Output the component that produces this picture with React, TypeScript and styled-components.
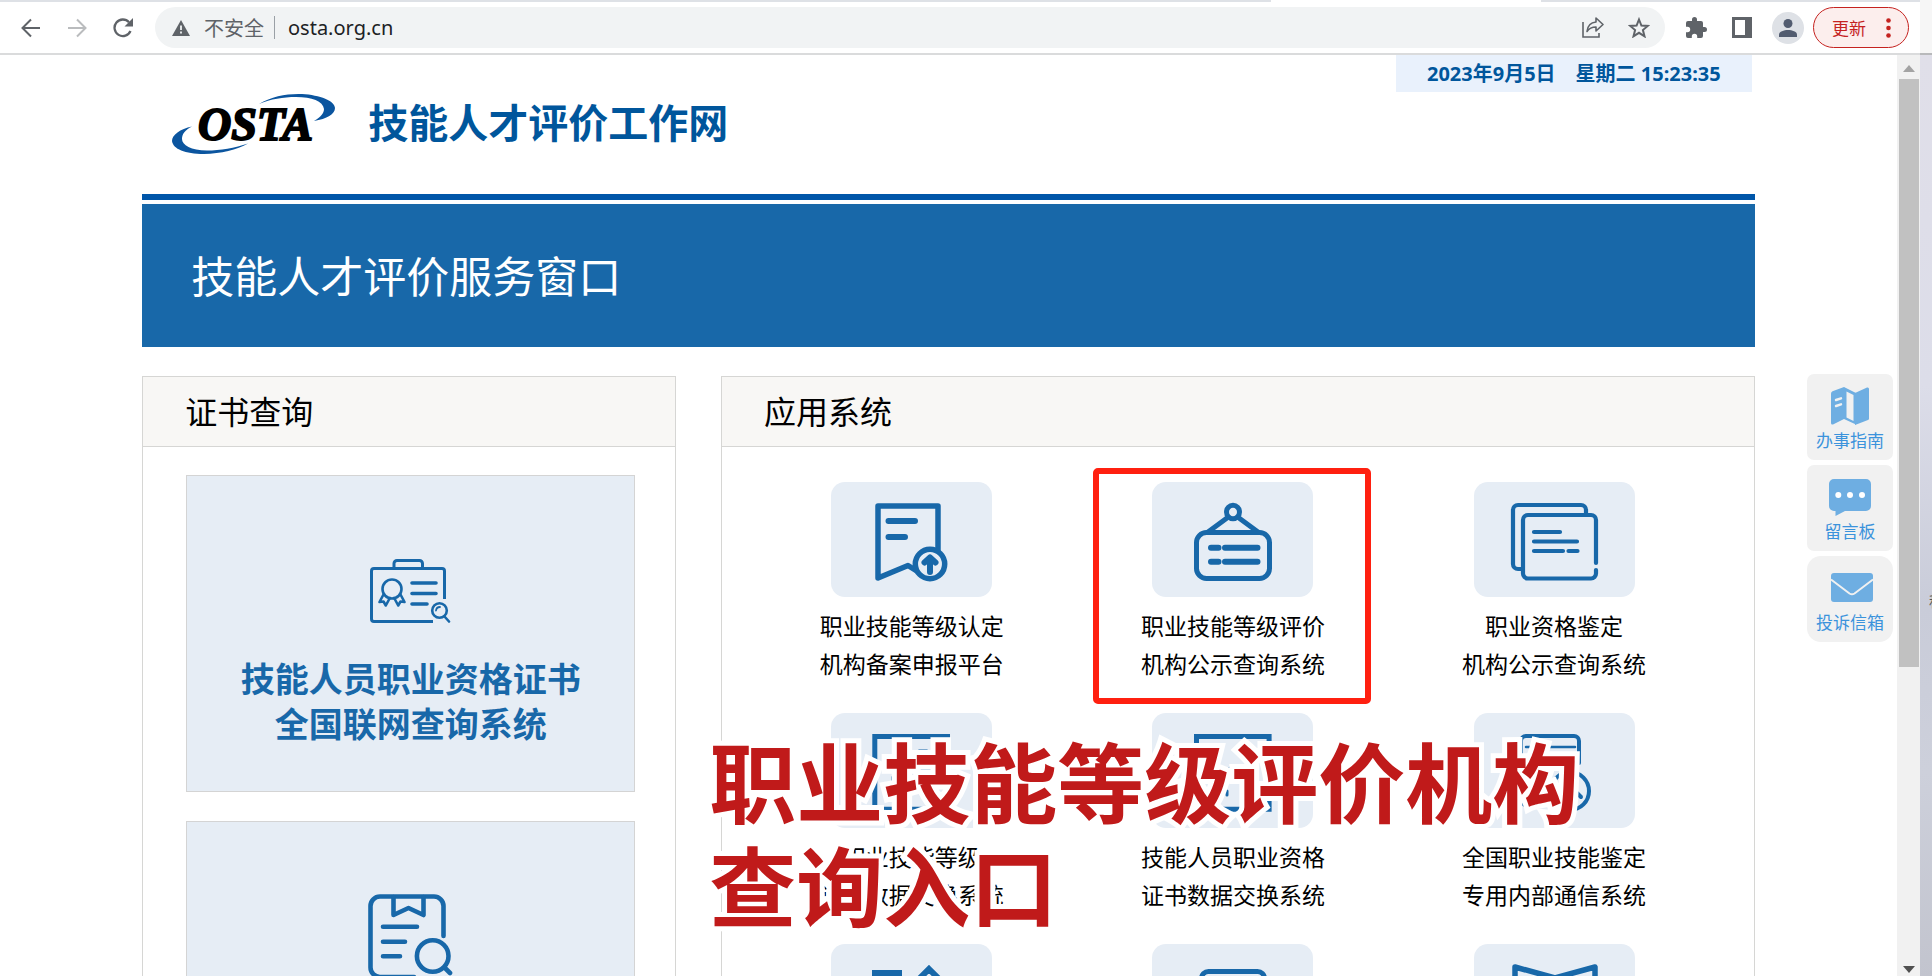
import React from "react";
import styled, { createGlobalStyle } from "styled-components";

const font = '"Noto Sans", "Noto Sans CJK SC", sans-serif';
const brand = "#1868a9";
const deep = "#00569c";
const tint = "#e6edf5";
const line = "#d6d6d4";

const GlobalStyle = createGlobalStyle`
  * { box-sizing: border-box; }
  body { margin: 0; background: #fff; font-family: ${font}; color: #000; }
  button, input { font-family: inherit; border: 0; padding: 0; background: none; }
  h1, h2, p, ul { margin: 0; padding: 0; font-weight: 400; }
  a { color: inherit; text-decoration: none; }
  svg { display: block; flex: none; }
`;

const Screen = styled.div`
  display: flex;
  height: 100vh;
  overflow: hidden;
`;

const Browser = styled.div`
  flex: 1;
  min-width: 0;
  display: flex;
  flex-direction: column;
`;

const TabStrip = styled.div`
  display: flex;
  height: 2px;
  background: #dee1e6;
`;

const TabSpace = styled.div<{ $grow: number; $active?: boolean }>`
  flex: ${(p) => p.$grow};
  background: ${(p) => (p.$active ? "#fff" : "transparent")};
`;

const Toolbar = styled.div`
  display: flex;
  align-items: center;
  height: 53px;
  padding: 0 11px 0 8px;
  border-bottom: 2px solid #dadbdc;
  background: #fff;
`;

const IconButton = styled.button`
  width: 46px;
  height: 41px;
  display: flex;
  align-items: center;
  justify-content: center;
`;

const Omnibox = styled.div`
  flex: 1;
  display: flex;
  align-items: center;
  height: 41px;
  margin: 0 8px 0 9px;
  padding: 0 3px 0 17px;
  border-radius: 21px;
  background: #f1f3f4;
`;

const Security = styled.label`
  display: flex;
  align-items: center;
  gap: 14px;
  height: 23px;
  padding-right: 10px;
  border-right: 1px solid #9aa0a6;
  font-size: 20px;
  color: #5f6368;
`;

const Address = styled.input`
  flex: 1;
  min-width: 0;
  margin-left: 13px;
  font-size: 20px;
  color: #202124;
  outline: 0;
`;

const Avatar = styled.span`
  display: flex;
  align-items: center;
  justify-content: center;
  width: 32px;
  height: 32px;
  border-radius: 50%;
  background: #dee1e6;
`;

const UpdateButton = styled.button`
  display: flex;
  align-items: center;
  gap: 20px;
  height: 41px;
  width: 96px;
  margin-left: 2px;
  padding-left: 18px;
  border: 1px solid #c5221f;
  border-radius: 21px;
  background: #fceeed;
  color: #c5221f;
  font-size: 17px;
`;

const Viewport = styled.div`
  flex: 1;
  min-height: 0;
  display: flex;
`;

const Page = styled.main`
  position: relative;
  flex: 1;
  min-width: 0;
  overflow: hidden;
`;

const Container = styled.div`
  position: relative;
  width: 85%;
  margin: 0 auto;
`;

const SiteHeader = styled.header`
  display: flex;
  align-items: flex-start;
  height: 139px;
  padding: 0 3px 0 18px;
`;

const SiteLogo = styled.a`
  display: flex;
  align-items: center;
  gap: 8px;
  margin-top: 30px;
`;

const SiteName = styled.span`
  font-size: 40px;
  line-height: 75px;
  font-weight: 700;
  color: ${deep};
`;

const Clock = styled.p`
  margin-left: auto;
  padding: 0 31px;
  background: #e9f1fc;
  color: ${deep};
  font-size: 20px;
  line-height: 37px;
  font-weight: 700;
  white-space: pre;
`;

const Banner = styled.section`
  padding-left: 49px;
  border-top: 6px solid #0056a9;
  background: linear-gradient(#fff 4px, ${brand} 4px);
`;

const BannerTitle = styled.h1`
  padding: 6px 0 0;
  font-size: 43px;
  line-height: 141px;
  color: #fff;
`;

const Columns = styled.div`
  display: grid;
  grid-template-columns: 534fr 1034fr;
  gap: 45px;
  margin-top: 29px;
`;

const Panel = styled.section`
  border: 1px solid ${line};
`;

const PanelTitle = styled.h2`
  padding-left: 42px;
  border-bottom: 1px solid ${line};
  background: #f8f7f5;
  font-size: 32px;
  line-height: 69px;
`;

const CardList = styled.div`
  display: flex;
  flex-direction: column;
  gap: 29px;
  padding: 28px 40px 28px 43px;
`;

const Card = styled.a`
  display: flex;
  flex-direction: column;
  align-items: center;
  min-height: 317px;
  padding-top: 72px;
  border: 1px solid #d4d4d4;
  background: ${tint};
`;

const CardIcon = styled.span`
  display: flex;
  align-items: center;
  height: 86px;
  margin-bottom: 23px;
`;

const CardText = styled.span`
  font-size: 34px;
  line-height: 45px;
  font-weight: 700;
  color: ${brand};
  text-align: center;
`;

const AppGrid = styled.ul`
  display: grid;
  grid-template-columns: repeat(3, 1fr);
  row-gap: 30px;
  padding: 35px 39px 35px 29px;
  list-style: none;
`;

const AppItem = styled.li`
  position: relative;
`;

const AppLink = styled.a`
  display: flex;
  flex-direction: column;
  align-items: center;
  gap: 10px;
`;

const Tile = styled.span`
  border-radius: 14px;
  background: ${tint};
`;

const AppText = styled.span`
  min-height: 76px;
  font-size: 23px;
  line-height: 38px;
  text-align: center;
`;

const Highlight = styled.span`
  position: absolute;
  inset: -14px 23px -21px 21px;
  border: 6px solid #ff2010;
  border-radius: 5px;
`;

const Caption = styled.p`
  position: absolute;
  top: 676px;
  left: 567px;
  z-index: 2;
  font-size: 87px;
  line-height: 104px;
  font-weight: 700;
  color: #c01a1a;
  white-space: nowrap;
  -webkit-text-stroke: 10px #fff;
  paint-order: stroke fill;
`;

const FloatMenu = styled.nav`
  position: absolute;
  top: 319px;
  right: 4px;
  display: flex;
  flex-direction: column;
  gap: 5px;
`;

const FloatLink = styled.a<{ $round?: boolean }>`
  display: flex;
  flex-direction: column;
  align-items: center;
  width: 86px;
  height: 86px;
  padding-top: 13px;
  border-radius: ${(p) => (p.$round ? 14 : 7)}px;
  background: #f1f1f1;
  color: #3b93dc;
  font-size: 17px;
  line-height: 32px;
`;

const Scrollbar = styled.div`
  display: flex;
  flex-direction: column;
  align-items: center;
  width: 23px;
  padding: 10px 0 3px;
  background: #f1f1f1;
`;

const Thumb = styled.div`
  flex: 588;
  width: 20px;
  margin-top: 7px;
  background: #c1c1c1;
`;

const Track = styled.div`
  flex: 299;
`;

const Desktop = styled.aside`
  width: 12px;
  overflow: hidden;
  border-top: 53px solid #f6f6f6;
  background: linear-gradient(#b8b9bb 2px, #e0dfe9 2px, #dcdde9 36%, #c9ccd9 60%, #cdd0db 78%, #c2c4ce);
`;

const DesktopLabel = styled.p`
  padding: 538px 0 0 9px;
  font-size: 15px;
  line-height: 20px;
  color: #555;
  white-space: nowrap;
`;

const stroke = {
  fill: "none",
  stroke: brand,
  strokeLinecap: "round" as const,
  strokeLinejoin: "round" as const,
};

const TileSvg = ({ width = 5, children }: { width?: number; children: React.ReactNode }) => (
  <svg width="161" height="115" viewBox="0 0 161 115" {...stroke} strokeWidth={width} aria-hidden="true">
    {children}
  </svg>
);

const OstaLogo = () => (
  <svg width="200" height="75" viewBox="0 0 200 75" role="img" aria-label="OSTA">
    <g fill="#0b559f">
      <path d="M99 19C112 11 127 8.500 142 9C160 10 175 16 175 23C175 29 167 34 154 36C161 32 164 28 164 24C163 16 152 12 136 12C123 12 111 14 99 19Z" />
      <path d="M32 41.500C20 44 12 50 12 56C13 64 25 69 44 69C61 68.500 77 65 88 58.500C75 63 60 65.500 47 65.500C31 65.500 22 60 22 54C22 49 25 45 32 41.500Z" />
    </g>
    <text x="38" y="55" fontFamily="Liberation Serif, serif" fontSize="46" fontWeight="700" fontStyle="italic" stroke="#000" strokeWidth="2">
      OSTA
    </text>
  </svg>
);

const IdCardIcon = () => (
  <svg width="81" height="64" viewBox="0 0 81 64" {...stroke} strokeWidth="3" aria-hidden="true">
    <path strokeLinecap="butt" d="M74.500 40V12a2.500 2.500 0 0 0-2.500-2.500H4A2.500 2.500 0 0 0 1.500 12v48A2.500 2.500 0 0 0 4 62.500h59" />
    <path d="M24 9V4.500A3 3 0 0 1 27 1.500h22.500a3 3 0 0 1 3 3V9" />
    <g strokeWidth="2.600">
      <circle cx="22" cy="30" r="9.500" />
      <path d="M13.500 35.500 9.500 43l4-.5 2.300 4 4-7.500M30.500 35.500l4 7.500-4-.5-2.300 4-4-7.500" />
      <circle cx="69.500" cy="51.500" r="7.300" />
      <path strokeWidth="1.800" d="M66 51.500a4 4 0 0 1 4-3.500" />
      <path d="m74.500 57.500 4.500 5" />
    </g>
    <path strokeWidth="3.600" d="M42 24h24M42 34.500h24M42 45h15" />
  </svg>
);

const ReportIcon = () => (
  <svg width="85" height="86" viewBox="0 0 85 86" {...stroke} strokeWidth="4.600" aria-hidden="true">
    <path d="M75.500 42V12a9.500 9.500 0 0 0-9.500-9.500H12A9.500 9.500 0 0 0 2.500 12v61.500A9.500 9.500 0 0 0 12 83h34" />
    <path d="M25.500 3v18l15-7 15 7V3" />
    <path d="M15 32.700h34M15 47.700h22M15 62.300h17" />
    <circle cx="64.700" cy="62" r="15.800" />
    <path d="m77 74 5 5" />
  </svg>
);

const FilingIcon = () => (
  <TileSvg width={5.5}>
    <path d="M107 68V24H47v72l30-12.500 8 5" />
    <path strokeWidth="6" d="M57.500 39H84M57.500 55H74" />
    <circle cx="99" cy="82" r="14.700" />
    <path strokeWidth="6" d="M99 90V77M93.500 80.500 99 75.500l5.500 5" />
  </TileSvg>
);

const SignIcon = () => (
  <TileSvg>
    <ellipse cx="81" cy="30" rx="6.500" ry="6.700" />
    <path d="M75 36 56 50M87 36l19 14" />
    <rect x="44.500" y="50.500" width="73" height="46" rx="10" />
    <path strokeWidth="6" d="M59 65.700h7.500M73 65.700h32.500M59 79.700h7.500M73 79.700h32.500" />
  </TileSvg>
);

const PagesIcon = () => (
  <TileSvg width={4.2}>
    <path strokeLinecap="butt" d="M112 32v-4a5 5 0 0 0-5-5H44a5 5 0 0 0-5 5v54a5 5 0 0 0 5 5h5" />
    <path d="M122 81V38a5 5 0 0 0-5-5H54a5 5 0 0 0-5 5v53.500a5 5 0 0 0 5 5h63a5 5 0 0 0 5-5V88" />
    <path d="M60 50h26M60 59.500h43M60 69h29M94.500 69h9" />
  </TileSvg>
);

const ExchangeIcon = () => (
  <TileSvg>
    <path strokeLinejoin="miter" d="M43.800 23.500h72.700v72.700H43.800z" />
    <path strokeWidth="3" d="M88 38h8M62 64v4M89 56h10" />
  </TileSvg>
);

const CertificateIcon = () => (
  <TileSvg>
    <path strokeLinejoin="miter" d="M44.500 23.500h72.600v72.700H44.500z" />
    <path strokeWidth="3" d="m92 44 5 5M78 55l-4 5M75 78v4" />
  </TileSvg>
);

const MessageIcon = () => (
  <TileSvg width={4}>
    <path d="M105 50V28a5 5 0 0 0-5-5H52a5 5 0 0 0-5 5v59a5 5 0 0 0 5 5h22" />
    <path strokeWidth="2.500" d="M52 34h49" />
    <circle cx="96" cy="78" r="19" />
    <path d="M107 84 103 80" />
  </TileSvg>
);

const BlocksIcon = () => (
  <TileSvg width={6}>
    <path strokeLinejoin="miter" d="M44 29h24v24H44zM98 25l14 14-14 14-14-14zM44 68h24v24H44zM86 68h24v24H86z" />
  </TileSvg>
);

const SheetIcon = () => (
  <TileSvg>
    <rect x="49.500" y="27.500" width="63" height="66" rx="7" />
  </TileSvg>
);

const BookIcon = () => (
  <TileSvg width={5.5}>
    <path d="M41 88V23l40 11 40-11v65L81 98z" />
  </TileSvg>
);

const MapIcon = () => (
  <svg width="38" height="38" viewBox="0 0 38 38" fill="#6eaee2" aria-hidden="true">
    <path d="M0 6.500Q0 5 1.500 4.300L13 0v32L2 37.500Q0 38 0 36z" />
    <path d="M13 0l12 6v31.500L13 32zM15.500 4.500v26L22.500 34V8z" fillRule="evenodd" />
    <path d="M24 6 36 .500q2-.5 2 1.500v29.500q0 1-1 1.500L24 38z" />
    <path d="m5 13 5-1.700M5 19l5-1.700" stroke="#f1f1f1" strokeWidth="2.400" strokeLinecap="round" />
  </svg>
);

const ChatIcon = () => (
  <svg width="42" height="38" viewBox="0 -1 42 38" overflow="visible" fill="#6eaee2" aria-hidden="true">
    <path d="M5 0h32a5 5 0 0 1 5 5v22a5 5 0 0 1-5 5H16L6.500 37v-5H5a5 5 0 0 1-5-5V5a5 5 0 0 1 5-5z" />
    <g fill="#fff">
      <circle cx="9.300" cy="16" r="3" />
      <circle cx="21" cy="16" r="3" />
      <circle cx="33" cy="16" r="3" />
    </g>
  </svg>
);

const MailIcon = () => (
  <svg width="48" height="38" viewBox="-5 -4 48 38" fill="#6eaee2" aria-hidden="true">
    <rect width="42" height="29" rx="3" />
    <path d="M0 6.500 18.500 20.500q2.500 1.500 5 0L42 6.500" fill="none" stroke="#f1f1f1" strokeWidth="2" />
  </svg>
);

const apps: { icon: React.ReactNode; lines: string[]; marked?: boolean }[] = [
  { icon: <FilingIcon />, lines: ["职业技能等级认定", "机构备案申报平台"] },
  { icon: <SignIcon />, lines: ["职业技能等级评价", "机构公示查询系统"], marked: true },
  { icon: <PagesIcon />, lines: ["职业资格鉴定", "机构公示查询系统"] },
  { icon: <ExchangeIcon />, lines: ["职业技能等级", "证书数据交换系统"] },
  { icon: <CertificateIcon />, lines: ["技能人员职业资格", "证书数据交换系统"] },
  { icon: <MessageIcon />, lines: ["全国职业技能鉴定", "专用内部通信系统"] },
  { icon: <BlocksIcon />, lines: [] },
  { icon: <SheetIcon />, lines: [] },
  { icon: <BookIcon />, lines: [] },
];

const BrowserBar = () => (
  <Toolbar>
    <IconButton aria-label="后退">
      <svg width="20" height="20" viewBox="0 0 20 20" fill="none" stroke="#5f6368" strokeWidth="2">
        <path d="M19 10H2M10 1.500 1.500 10l8.500 8.500" />
      </svg>
    </IconButton>
    <IconButton aria-label="前进">
      <svg width="20" height="20" viewBox="0 0 20 20" fill="none" stroke="#babcbe" strokeWidth="2">
        <path d="M1 10h17M10 1.500l8.500 8.500-8.500 8.500" />
      </svg>
    </IconButton>
    <IconButton aria-label="重新加载">
      <svg width="20" height="20" viewBox="0 0 20 20" fill="none" stroke="#5f6368" strokeWidth="2.300">
        <path d="M17.500 13A8.300 8.300 0 1 1 16 4.200" />
        <path d="M20 0v8.500h-8.500z" fill="#5f6368" stroke="none" />
      </svg>
    </IconButton>
    <Omnibox>
      <Security htmlFor="address">
        <svg width="18" height="16" viewBox="0 0 18 16" aria-hidden="true">
          <path d="M9 0l9 16H0z" fill="#5f6368" />
          <path d="M9 5.500v4.500M9 11.500v2" stroke="#f1f3f4" strokeWidth="1.800" />
        </svg>
        不安全
      </Security>
      <Address id="address" defaultValue="osta.org.cn" />
      <IconButton aria-label="分享">
        <svg width="22" height="21" viewBox="0 0 22 21" fill="none" stroke="#5f6368" strokeWidth="1.600">
          <path d="M1 5v15h16v-4" />
          <path strokeLinejoin="round" d="M14 1l7 6.500-7 6.500v-4c-4 0-7 1.500-9 4.500.5-5 3.500-9 9-9.500z" />
        </svg>
      </IconButton>
      <IconButton aria-label="收藏">
        <svg width="22" height="21" viewBox="0 0 22 21" fill="none" stroke="#5f6368" strokeWidth="2">
          <path d="m11 2.500 2.400 6 6.400.4-4.900 4.100 1.600 6.300-5.500-3.500-5.500 3.500L7.100 13 2.200 8.900l6.400-.4z" />
        </svg>
      </IconButton>
    </Omnibox>
    <IconButton aria-label="扩展程序">
      <svg width="24" height="24" viewBox="0 0 24 24" fill="#5f6368">
        <path d="M20.500 11H19V7a2 2 0 0 0-2-2h-4V3.500a2.500 2.500 0 0 0-5 0V5H4a2 2 0 0 0-2 2v3.800h1.500a2.700 2.700 0 0 1 0 5.400H2V20a2 2 0 0 0 2 2h3.800v-1.500a2.700 2.700 0 0 1 5.400 0V22H17a2 2 0 0 0 2-2v-4h1.500a2.500 2.500 0 0 0 0-5z" />
      </svg>
    </IconButton>
    <IconButton aria-label="侧边栏">
      <svg width="20" height="21" viewBox="0 0 20 21">
        <path d="M0 0h20v21H0zM3 3v15h10V3z" fill="#5f6368" fillRule="evenodd" />
      </svg>
    </IconButton>
    <IconButton aria-label="用户">
      <Avatar>
        <svg width="18" height="18" viewBox="0 0 18 18" fill="#525c70">
          <circle cx="9" cy="4.500" r="4.500" />
          <path d="M0 18v-2.500C0 12.500 5 11 9 11s9 1.500 9 4.500V18z" />
        </svg>
      </Avatar>
    </IconButton>
    <UpdateButton>
      更新
      <svg width="5" height="20" viewBox="0 0 5 20" fill="#c5221f" aria-hidden="true">
        <circle cx="2.500" cy="2.500" r="2.300" />
        <circle cx="2.500" cy="10" r="2.300" />
        <circle cx="2.500" cy="17.500" r="2.300" />
      </svg>
    </UpdateButton>
  </Toolbar>
);

export default function App() {
  return (
    <Screen>
      <GlobalStyle />
      <Browser>
        <TabStrip>
          <TabSpace $grow={1271} />
          <TabSpace $grow={270} $active />
          <TabSpace $grow={379} />
        </TabStrip>
        <BrowserBar />
        <Viewport>
          <Page>
            <Container>
              <SiteHeader>
                <SiteLogo href="#">
                  <OstaLogo />
                  <SiteName>技能人才评价工作网</SiteName>
                </SiteLogo>
                <Clock>{"2023年9月5日\u3000星期二 15:23:35"}</Clock>
              </SiteHeader>
              <Banner>
                <BannerTitle>技能人才评价服务窗口</BannerTitle>
              </Banner>
              <Columns>
                <Panel>
                  <PanelTitle>证书查询</PanelTitle>
                  <CardList>
                    <Card href="#">
                      <CardIcon>
                        <IdCardIcon />
                      </CardIcon>
                      <CardText>
                        技能人员职业资格证书
                        <br />
                        全国联网查询系统
                      </CardText>
                    </Card>
                    <Card href="#">
                      <CardIcon>
                        <ReportIcon />
                      </CardIcon>
                    </Card>
                  </CardList>
                </Panel>
                <Panel>
                  <PanelTitle>应用系统</PanelTitle>
                  <AppGrid>
                    {apps.map((app, i) => (
                      <AppItem key={i}>
                        <AppLink href="#">
                          <Tile>{app.icon}</Tile>
                          <AppText>
                            {app.lines.map((text) => (
                              <div key={text}>{text}</div>
                            ))}
                          </AppText>
                        </AppLink>
                        {app.marked && <Highlight />}
                      </AppItem>
                    ))}
                  </AppGrid>
                </Panel>
              </Columns>
              <Caption>
                职业技能等级评价机构
                <br />
                查询入口
              </Caption>
            </Container>
            <FloatMenu>
              <FloatLink href="#">
                <MapIcon />
                办事指南
              </FloatLink>
              <FloatLink href="#">
                <ChatIcon />
                留言板
              </FloatLink>
              <FloatLink href="#" $round>
                <MailIcon />
                投诉信箱
              </FloatLink>
            </FloatMenu>
          </Page>
          <Scrollbar>
            <svg width="12" height="7" viewBox="0 0 12 7" aria-hidden="true">
              <path d="M6 0l6 7H0z" fill="#a3a3a3" />
            </svg>
            <Thumb />
            <Track />
            <svg width="12" height="7" viewBox="0 0 12 7" aria-hidden="true">
              <path d="M6 7l6-7H0z" fill="#505050" />
            </svg>
          </Scrollbar>
        </Viewport>
      </Browser>
      <Desktop>
        <DesktopLabel>程</DesktopLabel>
      </Desktop>
    </Screen>
  );
}
